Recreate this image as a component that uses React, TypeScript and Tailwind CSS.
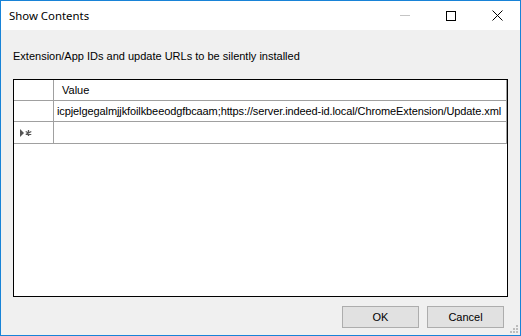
export default function App() {
  const font = { fontFamily: '"Liberation Sans", Arial, sans-serif' };
  return (
    <div className="w-[521px] h-[336px] border border-[#1883d7] flex flex-col bg-[#f0f0f0] overflow-hidden" style={font}>
      {/* Title bar */}
      <div className="h-[29px] bg-white flex items-center relative shrink-0">
        <span className="ml-[8px] text-[11.4px] text-black" style={{ fontFamily: '"Noto Sans", "Open Sans", sans-serif' }}>
          Show Contents
        </span>
        <div className="ml-auto flex h-full">
          <div className="w-[46px] flex items-center justify-center">
            <div className="w-[10px] h-px bg-[#c5c5c5]" />
          </div>
          <div className="w-[46px] flex items-center justify-center">
            <div className="w-[10px] h-[10px] border border-black" />
          </div>
          <div className="w-[46px] flex items-center justify-center">
            <svg width="11" height="11" viewBox="0 0 11 11">
              <path d="M0.5 0.5 L10.5 10.5 M10.5 0.5 L0.5 10.5" stroke="#000" strokeWidth="1" />
            </svg>
          </div>
        </div>
      </div>

      {/* Body */}
      <div className="flex-1 flex flex-col px-[12px] pt-[20px] relative">
        <div className="text-[11px] leading-[13px] text-black">
          Extension/App IDs and update URLs to be silently installed
        </div>

        <div className="mt-[16px] h-[218px] border border-black bg-white text-[11px] text-black">
          <div className="flex h-[21px] border-b border-[#a0a0a0]">
            <div className="w-[40px] border-r border-[#a0a0a0]" />
            <div className="flex-1 border-r border-[#a0a0a0] pl-[8px] flex items-center">Value</div>
          </div>
          <div className="flex h-[21px] border-b border-[#a0a0a0]">
            <div className="w-[40px] border-r border-[#a0a0a0]" />
            <div className="flex-1 border-r border-[#a0a0a0] pl-[3px] flex items-center whitespace-nowrap overflow-hidden tracking-[-0.1px]">
              icpjelgegalmjjkfoilkbeeodgfbcaam;https://server.indeed-id.local/ChromeExtension/Update.xml
            </div>
          </div>
          <div className="flex h-[22px] border-b border-[#a0a0a0]">
            <div className="w-[40px] border-r border-[#a0a0a0] flex items-center pl-[6px]">
              <svg width="14" height="8" viewBox="0 0 14 8">
                <path d="M0 0 L4 4 L0 8 Z" fill="#555" />
                <path d="M8.5 1 V7 M5.7 2.5 L11.3 5.5 M11.3 2.5 L5.7 5.5" stroke="#555" strokeWidth="1.3" />
              </svg>
            </div>
            <div className="flex-1 border-r border-[#a0a0a0]" />
          </div>
        </div>

        <div className="flex justify-end gap-[8px] mt-[9px] pr-[4px]">
          <button className="w-[77px] h-[22px] bg-[#e1e1e1] border border-[#adadad] text-[11px] text-black">OK</button>
          <button className="w-[77px] h-[22px] bg-[#e1e1e1] border border-[#adadad] text-[11px] text-black">Cancel</button>
        </div>

        {/* resize grip */}
        <svg className="absolute right-[1px] bottom-[1px]" width="10" height="10" viewBox="0 0 10 10">
          <rect x="7" y="1" width="2" height="2" fill="#bdbdbd" />
          <rect x="4" y="4" width="2" height="2" fill="#bdbdbd" />
          <rect x="7" y="4" width="2" height="2" fill="#bdbdbd" />
          <rect x="1" y="7" width="2" height="2" fill="#bdbdbd" />
          <rect x="4" y="7" width="2" height="2" fill="#bdbdbd" />
          <rect x="7" y="7" width="2" height="2" fill="#bdbdbd" />
        </svg>
      </div>
    </div>
  );
}
